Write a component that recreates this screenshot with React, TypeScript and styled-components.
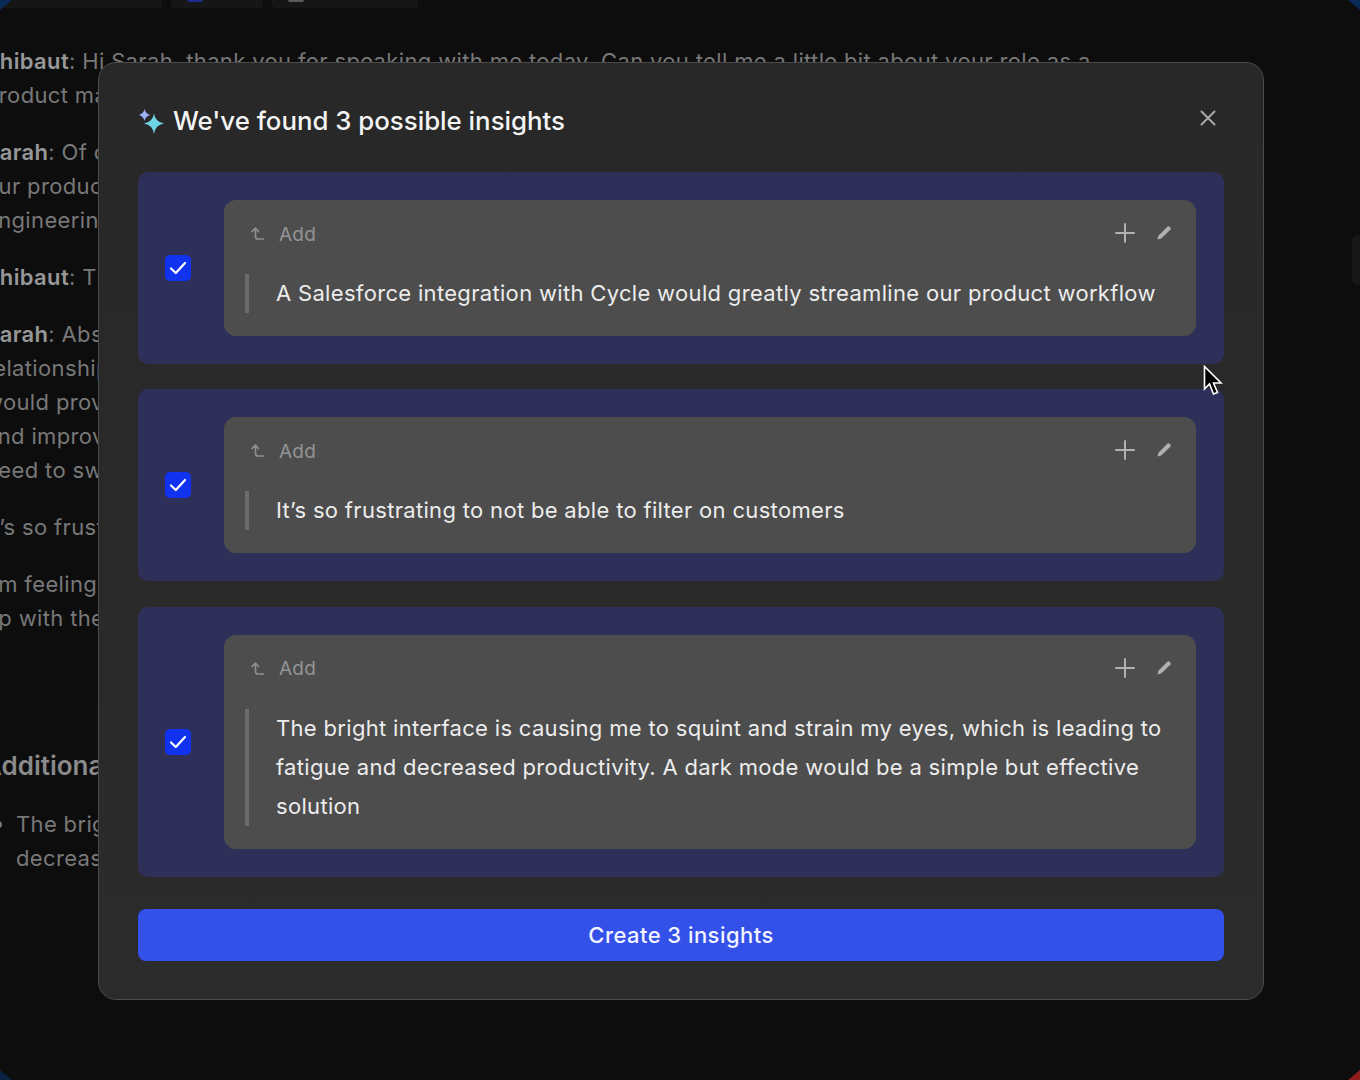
import React from "react";
import styled, { createGlobalStyle } from "styled-components";

const GlobalStyle = createGlobalStyle`
  html, body {
    margin: 0;
    height: 100%;
    background: #0d0d0e;
    overflow: hidden;
  }
`;

const Page = styled.div`
  position: relative;
  width: 1360px;
  height: 1080px;
  overflow: hidden;
  background: #0d0d0e;
  font-family: Inter, "Liberation Sans", sans-serif;
`;

const TopChips = styled.div`
  display: flex;
  gap: 9px;
  height: 8px;
`;

const Chip = styled.div<{ $w: number }>`
  width: ${(p) => p.$w}px;
  height: 8px;
  padding-left: 16px;
  box-sizing: border-box;
  background: #161617;
  border-radius: 0 0 4px 4px;
`;

const ChipIcon = styled.div<{ $c: string }>`
  width: 16px;
  height: 2px;
  border-radius: 0 0 6px 6px;
  background: ${(p) => p.$c};
`;

const Transcript = styled.div`
  margin-left: -15px;
  padding-top: 36px;
  white-space: nowrap;
  font-size: 22px;
  line-height: 34px;
  letter-spacing: 0.35px;
  color: #787878;
`;

const Para = styled.p`
  margin: 0 0 23px;
  strong {
    color: #979797;
    font-weight: 600;
  }
`;

const SectionHead = styled.h3`
  margin: 114px 0 24px -2px;
  font-size: 26px;
  line-height: 34px;
  font-weight: 600;
  color: #8a8a8a;
  letter-spacing: 0;
`;

const Bullets = styled.ul`
  margin: 0;
  padding-left: 31px;
  li::marker {
    color: #7b7b7b;
  }
`;

const SideHandle = styled.div`
  position: absolute;
  right: 0;
  top: 235px;
  width: 8px;
  height: 50px;
  border-radius: 6px 0 0 6px;
  background: #171718;
`;

const CornerGlow = styled.div<{ $c: string; $side: "tr" | "br" | "bl" | "tl" }>`
  position: absolute;
  width: 16px;
  height: 10px;
  background: ${(p) => p.$c};
  ${(p) => (p.$side[0] === "t" ? "top: -4px;" : "bottom: -4px;")}
  ${(p) => (p.$side[1] === "r" ? "right: -5px;" : "left: -5px;")}
  transform: rotate(${(p) => (p.$side === "tr" || p.$side === "bl" ? 40 : -40)}deg);
`;

const Modal = styled.div`
  position: absolute;
  left: 98px;
  top: 62px;
  width: 1166px;
  height: 938px;
  box-sizing: border-box;
  padding: 0 39px;
  border: 1px solid #4b4b4b;
  border-radius: 18px;
  background: linear-gradient(180deg, #282828, #2b2b2b);
  display: flex;
  flex-direction: column;
`;

const Header = styled.div`
  display: flex;
  align-items: center;
  height: 109px;
  padding-top: 7px;
  box-sizing: border-box;
  gap: 9px;
`;

const Title = styled.h2`
  margin: 0;
  flex: 1;
  font-size: 25.8px;
  font-weight: 500;
  line-height: 36px;
  color: #f4f4f4;
`;

const CloseButton = styled.button`
  display: flex;
  padding: 0;
  margin: -6px 7px 0 0;
  border: 0;
  background: none;
  color: #a8a8a8;
`;

const List = styled.div`
  display: flex;
  flex-direction: column;
  gap: 25.4px;
`;

const Suggestion = styled.div`
  display: flex;
  align-items: center;
  padding: 28px 28px 28px 27px;
  border-radius: 10px;
  background: #2e3059;
`;

const Check = styled.div`
  flex: none;
  width: 26px;
  height: 26px;
  margin-right: 33px;
  border-radius: 5px;
  background: #1133f0;
  display: flex;
  align-items: center;
  justify-content: center;
`;

const InsightCard = styled.div`
  flex: 1;
  box-sizing: border-box;
  padding: 20px 23px 23px 21px;
  border-radius: 12px;
  background: #4d4d4d;
`;

const CardTop = styled.div`
  display: flex;
  align-items: center;
  height: 28px;
  margin-bottom: 26px;
  padding-left: 5px;
`;

const AddLabel = styled.span`
  flex: 1;
  margin-left: 13px;
  font-size: 19px;
  letter-spacing: 0.2px;
  color: #949494;
`;

const CardActions = styled.div`
  display: flex;
  align-items: center;
  gap: 20px;
  margin: -2px 1px 0 0;
  color: #b0b0b0;
`;

const Quote = styled.div`
  border-left: 4px solid #6c6c6c;
  padding-left: 27px;
  font-size: 22px;
  line-height: 39px;
  color: #ececec;
  letter-spacing: 0.32px;
`;

const CreateButton = styled.button`
  margin-top: 32.2px;
  height: 52px;
  flex: none;
  border: 0;
  border-radius: 8px;
  background: #3350e8;
  color: #f2f4ff;
  font-family: inherit;
  font-size: 22px;
  font-weight: 500;
  letter-spacing: 0.45px;
`;

const Cursor = styled.svg`
  position: absolute;
  left: 1203px;
  top: 365px;
`;

const insights = [
  "A Salesforce integration with Cycle would greatly streamline our product workflow",
  "It’s so frustrating to not be able to filter on customers",
  "The bright interface is causing me to squint and strain my eyes, which is leading to fatigue and decreased productivity. A dark mode would be a simple but effective solution",
];

const SparkleIcon = () => (
  <svg width="26" height="26" viewBox="0 0 26 26" style={{ flex: "none" }}>
    <path d="M6.5 1 Q7.4 5.6 12 7 Q7.4 8.4 6.5 13 Q5.6 8.4 1 7 Q5.6 5.6 6.5 1 Z" fill="#9fb0f5" />
    <path d="M16 5.5 Q17.2 14 26 15.5 Q17.2 17 16 26 Q14.8 17 6 15.5 Q14.8 14 16 5.5 Z" fill="#6fd3e6" />
  </svg>
);

const CloseIcon = () => (
  <svg width="18" height="18" viewBox="0 0 18 18" fill="none" stroke="currentColor" strokeWidth="2" strokeLinecap="round">
    <path d="M2.5 2.5 L15.5 15.5 M15.5 2.5 L2.5 15.5" />
  </svg>
);

const ReturnIcon = () => (
  <svg width="16" height="16" viewBox="0 0 16 16" fill="none" stroke="#8e8e8e" strokeWidth="1.7" strokeLinecap="round" strokeLinejoin="round">
    <path d="M2 5.5 L5.5 2 L8.5 5.5 M5.5 3 V10.5 Q5.5 13 8 13 H13.5" />
  </svg>
);

const PlusIcon = () => (
  <svg width="22" height="22" viewBox="0 0 22 22" fill="none" stroke="currentColor" strokeWidth="2" strokeLinecap="round">
    <path d="M11 2 V20 M2 11 H20" />
  </svg>
);

const PencilIcon = () => (
  <svg width="16" height="16" viewBox="0 0 16 16">
    <path d="M11.6 1.4 Q12.6 0.8 14 2 Q15.2 3.4 14.6 4.4 L5.2 13.6 L1.4 14.6 L2.4 10.8 Z" fill="currentColor" />
  </svg>
);

const CheckMark = () => (
  <svg width="18" height="14" viewBox="0 0 18 14" fill="none" stroke="#fff" strokeWidth="2.2" strokeLinecap="round" strokeLinejoin="round">
    <path d="M2 7.5 L6.8 12 L16 2" />
  </svg>
);

const App = () => {
  return (
    <Page>
      <GlobalStyle />
      <TopChips>
        <Chip $w={162} />
        <Chip $w={92}>
          <ChipIcon $c="#1f2c8f" />
        </Chip>
        <Chip $w={146}>
          <ChipIcon $c="#5a5a5a" />
        </Chip>
      </TopChips>
      <Transcript>
        <Para>
          <strong>Thibaut</strong>: Hi Sarah, thank you for speaking with me today. Can you tell me a little bit about your role as a
          <br />
          product manager
        </Para>
        <Para>
          <strong>Sarah</strong>: Of course
          <br />
          our product
          <br />
          engineering
        </Para>
        <Para>
          <strong>Thibaut</strong>: That
        </Para>
        <Para>
          <strong>Sarah</strong>: Absolutely
          <br />
          relationships
          <br />
          would provide
          <br />
          and improve
          <br />
          need to switch
        </Para>
        <Para>It’s so frustrating</Para>
        <Para>
          I'm feeling
          <br />
          up with the
        </Para>
        <SectionHead>Additional</SectionHead>
        <Bullets>
          <li>
            The bright
            <br />
            decreased
          </li>
        </Bullets>
      </Transcript>
      <SideHandle />
      <CornerGlow $c="#0b2a55" $side="tr" />
      <CornerGlow $c="#8f1d1d" $side="br" />
      <CornerGlow $c="#0a2140" $side="bl" />
      <CornerGlow $c="#0b2a55" $side="tl" />
      <Modal>
        <Header>
          <SparkleIcon />
          <Title>We've found 3 possible insights</Title>
          <CloseButton>
            <CloseIcon />
          </CloseButton>
        </Header>
        <List>
          {insights.map((text) => (
            <Suggestion key={text}>
              <Check>
                <CheckMark />
              </Check>
              <InsightCard>
                <CardTop>
                  <ReturnIcon />
                  <AddLabel>Add</AddLabel>
                  <CardActions>
                    <PlusIcon />
                    <PencilIcon />
                  </CardActions>
                </CardTop>
                <Quote>{text}</Quote>
              </InsightCard>
            </Suggestion>
          ))}
        </List>
        <CreateButton>Create 3 insights</CreateButton>
      </Modal>
      <Cursor width="20" height="32" viewBox="0 0 20 32">
        <path d="M1.5 1.5 V24 L6.5 19 L10.5 29 L14.5 27.5 L10.5 18 H18 Z" fill="#000" stroke="#fff" strokeWidth="1.6" />
      </Cursor>
    </Page>
  );
};

export default App;
